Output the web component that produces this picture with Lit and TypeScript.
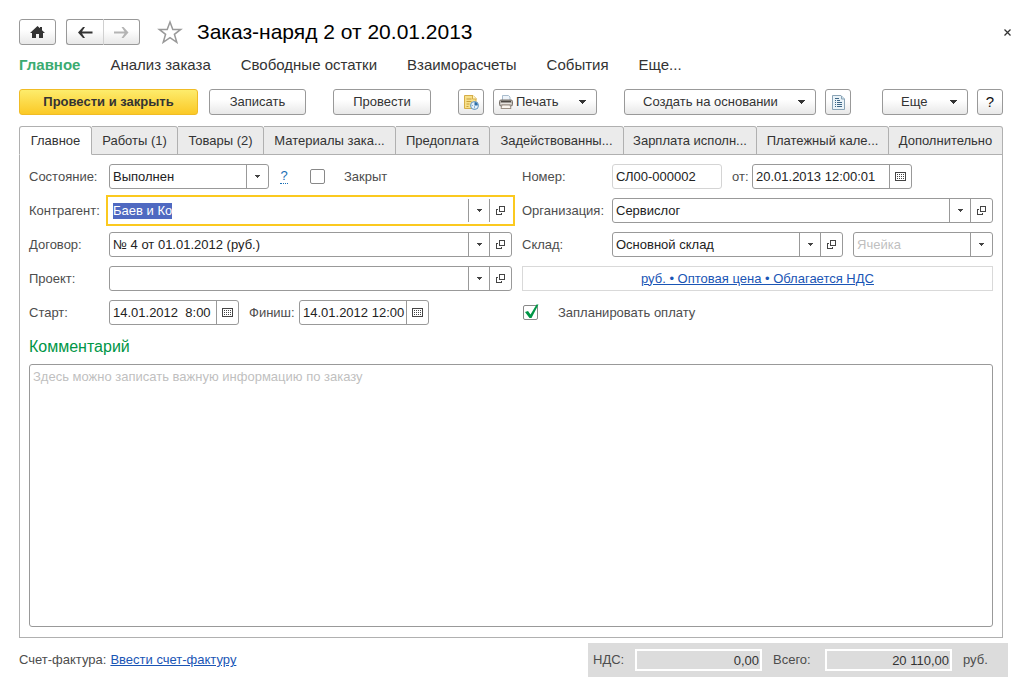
import { LitElement, html, css, nothing } from "lit";
import { customElement, property, query } from "lit/decorators.js";
import { classMap } from "lit/directives/class-map.js";

const bigCaret = html`<svg class="caret" width="7" height="4" viewBox="0 0 7 4" shape-rendering="crispEdges" aria-hidden="true"><path d="M0 0h7v1H6v1H5v1H4v1H3V3H2V2H1V1H0z" fill="#333"/></svg>`;
const smallCaret = html`<svg width="5" height="3" viewBox="0 0 5 3" shape-rendering="crispEdges" aria-hidden="true"><path d="M0 0h5v1H4v1H3v1H2V2H1V1H0z" fill="#444"/></svg>`;
const openIcon = html`<svg width="9" height="9" viewBox="0 0 9 9" shape-rendering="crispEdges" fill="none" stroke="#444" aria-hidden="true"><path d="M3.5 .5h5v5h-5z"/><path d="M2 3.5H.5v5h5V7"/></svg>`;
const calendarIcon = html`<svg width="11" height="9" viewBox="0 0 11 9" shape-rendering="crispEdges" aria-hidden="true">
  <path d="M.5 .5h10v8H.5z" fill="none" stroke="#444"/>
  <path d="M2 2.5h7M2 4.5h7M2 6.5h7" stroke="#444" stroke-dasharray="1 1" fill="none"/></svg>`;

const homeIcon = html`<svg width="15" height="12" viewBox="0 0 15 12" aria-hidden="true"><path d="M7.5 0 10 2.3V1h2v3.2L15 7h-2v5H9V8H6v4H2V7H0z" fill="#333"/></svg>`;
const backIcon = html`<svg width="15" height="11" viewBox="0 0 15 11" aria-hidden="true"><path d="M5 0 0 5.500 5 11h2L4 6.500H14.500V4.500H4L7 0z" fill="#333"/></svg>`;
const forwardIcon = html`<svg width="15" height="11" viewBox="0 0 15 11" aria-hidden="true"><path d="M9.500 0l5 5.500-5 5.500h-2l3-4.500H0V4.500h10.500L7.500 0z" fill="#b4b4b4"/></svg>`;
const starIcon = html`<svg width="26" height="24" viewBox="0 0 26 24" fill="#fff" stroke="#999" stroke-width="1.500" aria-hidden="true"><path d="M13 2l2.800 7.400h7.900l-6.300 4.900 2.400 8L13 17.600l-6.800 4.700 2.400-8L2.300 9.400h7.900z"/></svg>`;
const noteClockIcon = html`<svg width="16" height="16" viewBox="0 0 16 16" aria-hidden="true">
  <path d="M1.500 1.500h8.500l3 3v10H1.500z" fill="#f7e08a" stroke="#d5ad48"/>
  <path d="M9.500 1v4h4" fill="#fff6c8" stroke="#d5ad48"/>
  <path d="M3.500 5h5M3.500 7.500h5M3.500 10h3M3.500 12.500h2" stroke="#c9a03c"/>
  <circle cx="11.500" cy="11.500" r="4" fill="#e4f1fb" stroke="#5f92bd"/>
  <path d="M11.500 11.500V8a3.500 3.500 0 0 1 3.300 3.500z" fill="#2c6da8"/>
  <path d="M11.500 12v2.500M8.500 11.500h1.500" stroke="#8fb3d0"/></svg>`;
const printerIcon = html`<svg width="14" height="14" viewBox="0 0 14 14" aria-hidden="true">
  <path d="M3.500 .5h6l1.500 1.500v4H3.500z" fill="#eef4fa" stroke="#a9bccd"/>
  <rect x=".5" y="5" width="13" height="6" rx="1.500" fill="#b9b4ae" stroke="#77716b"/>
  <path d="M2 6.500h10" stroke="#4d4843" stroke-width="1.500"/>
  <path d="M1.500 8.500h11" stroke="#e6e2dd"/>
  <path d="M3 10h8l1 3.500H2z" fill="#faf5ee" stroke="#9a8f84"/></svg>`;
const reportIcon = html`<svg width="13" height="15" viewBox="0 0 13 15" aria-hidden="true">
  <path d="M.5 .5h8.500l3.500 3.500v10.500H.5z" fill="#eaf3f8" stroke="#8aa4b6"/>
  <path d="M9.500 1v3h3" fill="#cfe2ee" stroke="#8aa4b6"/>
  <path d="M3 3.500h4M3 5.500h1M5 5.500h3M3 7.500h1M5 7.500h5M3 9.500h1M5 9.500h5M3 11.500h1M5 11.500h5" stroke="#3f6786"/></svg>`;

const base = css`
  *, *::before, *::after { box-sizing: border-box; }
  button, input, select, textarea { font: inherit; color: inherit; margin: 0; outline: none; }
  a { color: #1a55b5; text-decoration: underline; }
`;

type Trailing = "list" | "open" | "date";

/** Single-line field with optional drop-down, open and calendar buttons. */
@customElement("form-field")
export class FormField extends LitElement {
  @property() label = "";
  @property() value = "";
  @property() placeholder = "";
  @property({ attribute: false }) trailing: Trailing[] = [];
  @property({ attribute: false }) options: string[] = [];
  @property({ type: Boolean }) dim = false;
  @property({ type: Boolean }) active = false;
  @query("input") input?: HTMLInputElement;

  static styles = [base, css`
    :host { display: flex; align-items: center; min-width: 0; color: #4d4d4d; }
    .label { flex: none; width: var(--label-width, auto); white-space: nowrap; }
    .box { flex: 1; display: flex; min-width: 0; height: 25px; border: 1px solid #999; border-radius: 3px; background: #fff; color: #222; }
    .box.dim { border-color: #d4d4d4; }
    .box.active { border-color: transparent; border-radius: 0; outline: 2px solid #fbc91f; outline-offset: 1px; }
    .value { flex: 1; width: 0; min-width: 0; padding: 0 0 0 3px; border: 0; background: none; appearance: none; white-space: pre; }
    .value::placeholder { color: #bfbfbf; opacity: 1; }
    .value::selection { background: #4f69c1; color: #fff; }
    .btn { display: flex; flex: none; align-items: center; justify-content: center; width: 21px; padding: 0; border: 0; border-left: 1px solid #999; background: none; }
    .btn:last-child { width: 22px; }
    .arrow { pointer-events: none; }
  `];

  firstUpdated() {
    if (this.active) {
      this.input?.focus();
      this.input?.select();
    }
  }

  private button(kind: Trailing) {
    const names = { list: "Выбрать из списка", open: "Открыть", date: "Календарь" };
    const icons = { list: smallCaret, open: openIcon, date: calendarIcon };
    return html`<button class="btn" type="button" aria-label=${names[kind]}>${icons[kind]}</button>`;
  }

  render() {
    return html`
      ${this.label ? html`<label class="label" for="control">${this.label}</label>` : nothing}
      <div class=${classMap({ box: true, dim: this.dim, active: this.active })}>
        ${this.options.length
          ? html`<select id="control" class="value">${this.options.map((o) => html`<option ?selected=${o === this.value}>${o}</option>`)}</select>
              <span class="btn arrow">${smallCaret}</span>`
          : html`<input id="control" class="value" type="text" .value=${this.value} placeholder=${this.placeholder}
              aria-label=${this.label || this.placeholder} ?readonly=${this.dim} />`}
        ${this.trailing.map((k) => this.button(k))}
      </div>`;
  }
}

const sections = ["Главное", "Анализ заказа", "Свободные остатки", "Взаиморасчеты", "События", "Еще..."];
const tabs = ["Главное", "Работы (1)", "Товары (2)", "Материалы зака...", "Предоплата",
  "Задействованны...", "Зарплата исполн...", "Платежный кале...", "Дополнительно"];

@customElement("app-root")
export class AppRoot extends LitElement {
  static styles = [base, css`
    :host { display: flex; flex-direction: column; min-height: 100vh; box-sizing: border-box; padding: 19px 26px 9px 19px;
      background: #fff; color: #4d4d4d; font: 13px/16px "Liberation Sans", Arial, sans-serif; }
    .btn { display: flex; align-items: center; justify-content: center; height: 26px; padding: 0; border: 1px solid #999; border-radius: 3px;
      background: linear-gradient(#fff 40%, #e8e8e8); color: #333; white-space: nowrap; }

    .head { display: flex; align-items: center; height: 26px; }
    .home { width: 37px; margin-right: 10px; }
    .history { display: flex; margin-right: 17px; }
    .back { width: 38px; border-radius: 3px 0 0 3px; border-right-color: #d0d0d0; }
    .forward { width: 36px; border-left: 0; border-radius: 0 3px 3px 0; }
    .star { display: flex; padding: 0; border: 0; background: none; }
    .title { flex: 1; margin: 0 0 0 14px; color: #000; font-size: 21px; line-height: 26px; font-weight: 400; white-space: nowrap; }
    .close { display: flex; margin-right: -12px; padding: 4px; border: 0; background: none; color: #333; }

    .sections { display: flex; gap: 30px; margin-top: 10px; font-size: 15px; line-height: 20px; white-space: nowrap; }
    .section { color: #333; text-decoration: none; }
    .section.current { color: #3bab71; font-weight: 700; }

    .toolbar { display: flex; justify-content: space-between; margin-top: 14px; }
    .group { display: flex; }
    .group.right { gap: 9px; }
    .primary { width: 179px; margin-right: 11px; border-color: #f0bc25; background: linear-gradient(#fdec6c, #fbc926); font-weight: 700; }
    .save { width: 97px; margin-right: 27px; }
    .post { width: 98px; margin-right: 27px; }
    .square { width: 26px; }
    .remind { margin-right: 9px; }
    .print { width: 104px; margin-right: 27px; padding: 0 10px 0 5px; gap: 3px; }
    .create { width: 192px; margin-right: 9px; padding: 0 10px 0 18px; }
    .more { width: 86px; padding: 0 10px 0 18px; }
    .caret { margin-left: auto; }
    .help { font-size: 15px; color: #111; }

    .tabs { display: grid; grid-template-columns: 73fr 86fr 86fr 132fr 94fr 134fr 133fr 132fr 114fr; margin-top: 11px; }
    .tab { height: 29px; min-width: 0; padding: 0; overflow: hidden; border: 1px solid #b0b0b0; border-left-width: 0; border-radius: 0 3px 0 0;
      background: #ebebeb; color: #333; white-space: nowrap; }
    .tab:first-child { border-left-width: 1px; border-radius: 3px 3px 0 0; }
    .tab.current { border-bottom-color: #fff; background: #fff; }
    .panel { flex: 1; display: flex; flex-direction: column; padding: 9px 9px 10px; border: 1px solid #b0b0b0; border-top: 0; }

    .form { display: grid; grid-template-columns: minmax(0, 483fr) minmax(0, 471fr); gap: 10px; }
    .side { display: flex; flex-direction: column; gap: 9px; min-width: 0; }
    .left { --label-width: 80px; }
    .right-side { --label-width: 90px; }
    .row { display: flex; align-items: center; height: 25px; }
    .state { width: 240px; }
    .hint { width: 8px; margin: 0 22px 0 11px; color: #1a6fb5; text-align: center; text-decoration: none; border-bottom: 1px dotted #1a6fb5; line-height: 14px; }
    .tick { display: grid; align-items: center; }
    .tick > * { grid-area: 1 / 1; }
    .checkbox { appearance: none; width: 15px; height: 15px; border: 1px solid #888; border-radius: 2px; background: #fff; }
    .mark { pointer-events: none; }
    .check-label { display: flex; align-items: center; gap: 19px; }
    .start { width: 210px; margin-right: 10px; }
    .finish { --label-width: 50px; width: 180px; }
    .number { width: 200px; margin-right: 10px; }
    .date { --label-width: 20px; width: 180px; }
    .stock { flex: 321; margin-right: 10px; }
    .cell { flex: 140; }
    .terms { display: flex; align-items: center; justify-content: center; height: 25px; border: 1px solid #d9d9d9; }
    .pay { padding-left: 1px; }

    .caption { margin: 12px 0 7px; color: #009646; font-size: 16px; line-height: 20px; font-weight: 400; }
    .comment { flex: 1; display: block; width: 100%; min-height: 120px; padding: 4px 3px; border: 1px solid #999; border-radius: 3px; resize: none; color: #222; }
    .comment::placeholder { color: #bfbfbf; opacity: 1; }

    .foot { display: flex; align-items: center; justify-content: space-between; margin: 5px -5px 0 0; }
    .invoice { display: flex; gap: 4px; }
    .totals { display: flex; align-items: center; width: 420px; height: 34px; padding-left: 5px; background: #dcdcdc; }
    .total { width: 127px; height: 22px; margin-right: 11px; padding: 0 1px; border: 2px solid #fff; background: none; color: #333; text-align: right; }
    .vat-label { width: 42px; }
    .sum-label { width: 52px; }
  `];

  render() {
    return html`
      <header class="head">
        <button class="btn home" type="button" aria-label="Домой">${homeIcon}</button>
        <div class="history">
          <button class="btn back" type="button" aria-label="Назад">${backIcon}</button>
          <button class="btn forward" type="button" aria-label="Вперед">${forwardIcon}</button>
        </div>
        <button class="star" type="button" aria-label="В избранное">${starIcon}</button>
        <h1 class="title">Заказ-наряд 2 от 20.01.2013</h1>
        <button class="close" type="button" aria-label="Закрыть">
          <svg width="7" height="7" viewBox="0 0 7 7" stroke="currentColor" stroke-width="1.300" aria-hidden="true"><path d="M.5 .5l6 6M6.500 .5l-6 6"/></svg>
        </button>
      </header>

      <nav class="sections">
        ${sections.map((s, i) => html`<a class=${classMap({ section: true, current: i === 0 })} href="#">${s}</a>`)}
      </nav>

      <div class="toolbar">
        <div class="group">
          <button class="btn primary" type="button">Провести и закрыть</button>
          <button class="btn save" type="button">Записать</button>
          <button class="btn post" type="button">Провести</button>
          <button class="btn square remind" type="button" aria-label="Напоминание">${noteClockIcon}</button>
          <button class="btn print" type="button">${printerIcon}Печать${bigCaret}</button>
          <button class="btn create" type="button">Создать на основании${bigCaret}</button>
          <button class="btn square" type="button" aria-label="Отчет">${reportIcon}</button>
        </div>
        <div class="group right">
          <button class="btn more" type="button">Еще${bigCaret}</button>
          <button class="btn square help" type="button">?</button>
        </div>
      </div>

      <div class="tabs" role="tablist">
        ${tabs.map((t, i) => html`<button class=${classMap({ tab: true, current: i === 0 })} type="button" role="tab" aria-selected=${i === 0}>${t}</button>`)}
      </div>
      <main class="panel">
        <div class="form">
          <div class="side left">
            <div class="row">
              <form-field class="state" label="Состояние:" value="Выполнен" .options=${["Выполнен", "В работе"]}></form-field>
              <a class="hint" href="#">?</a>
              <label class="check-label"><input class="checkbox" type="checkbox" />Закрыт</label>
            </div>
            <form-field label="Контрагент:" value="Баев и Ко" active .trailing=${["list", "open"]}></form-field>
            <form-field label="Договор:" value="№ 4 от 01.01.2012 (руб.)" .trailing=${["list", "open"]}></form-field>
            <form-field label="Проект:" .trailing=${["list", "open"]}></form-field>
            <div class="row">
              <form-field class="start" label="Старт:" value="14.01.2012  8:00" .trailing=${["date"]}></form-field>
              <form-field class="finish" label="Финиш:" value="14.01.2012 12:00" .trailing=${["date"]}></form-field>
            </div>
          </div>
          <div class="side right-side">
            <div class="row">
              <form-field class="number" label="Номер:" value="СЛ00-000002" dim></form-field>
              <form-field class="date" label="от:" value="20.01.2013 12:00:01" .trailing=${["date"]}></form-field>
            </div>
            <form-field label="Организация:" value="Сервислог" .trailing=${["list", "open"]}></form-field>
            <div class="row">
              <form-field class="stock" label="Склад:" value="Основной склад" .trailing=${["list", "open"]}></form-field>
              <form-field class="cell" placeholder="Ячейка" .trailing=${["list"]}></form-field>
            </div>
            <div class="terms"><a href="#">руб. • Оптовая цена • Облагается НДС</a></div>
            <div class="row pay">
              <label class="check-label">
                <span class="tick">
                  <input class="checkbox" type="checkbox" checked />
                  <svg class="mark" width="16" height="17" viewBox="0 0 16 17" aria-hidden="true"><path d="M2 8l3-1 2.500 3.500L13.500 .5h2L8.500 14H6.500z" fill="#009646"/></svg>
                </span>
                Запланировать оплату
              </label>
            </div>
          </div>
        </div>
        <h2 class="caption" id="comment-caption">Комментарий</h2>
        <textarea class="comment" aria-labelledby="comment-caption" placeholder="Здесь можно записать важную информацию по заказу"></textarea>
      </main>

      <footer class="foot">
        <div class="invoice"><span>Счет-фактура:</span><a href="#">Ввести счет-фактуру</a></div>
        <div class="totals">
          <label class="vat-label" for="vat">НДС:</label>
          <input class="total" id="vat" type="text" readonly .value=${"0,00"} />
          <label class="sum-label" for="sum">Всего:</label>
          <input class="total" id="sum" type="text" readonly .value=${"20 110,00"} />
          <span>руб.</span>
        </div>
      </footer>
    `;
  }
}
